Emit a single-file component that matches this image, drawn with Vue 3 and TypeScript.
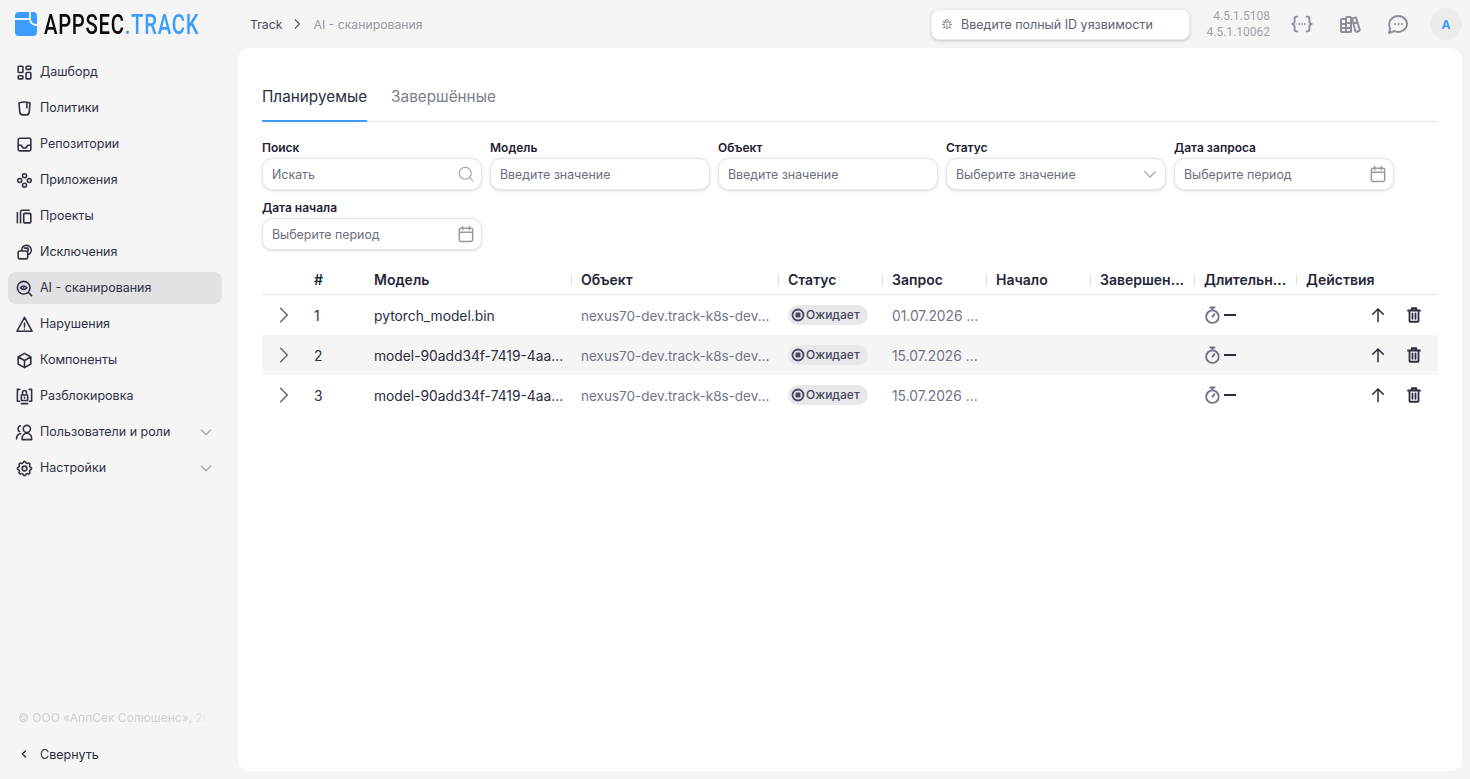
<template>
  <div class="layout">
    <aside class="sidebar">
      <div class="logo">
        <svg class="logo-mark" viewBox="0 0 22 24" width="22" height="24">
          <rect class="mark-bg" width="22" height="24" rx="4" />
          <path class="mark-line" d="M0 7h15V0M15 7c0 3.500 3 6 7 6" />
        </svg>
        <span class="logo-text">APPSEC<span class="logo-accent">.TRACK</span></span>
      </div>
      <nav class="nav">
        <a v-for="item in navItems" :key="item.label" class="nav-item" :class="{ active: item.active }">
          <svg class="nav-icon" viewBox="0 0 24 24"><path :d="item.icon" /></svg>
          <span class="nav-label">{{ item.label }}</span>
          <svg v-if="item.sub" class="nav-caret" viewBox="0 0 24 24"><path d="M5 9l7 7 7-7" /></svg>
        </a>
      </nav>
      <div class="copyright">© ООО «АппСек Солюшенс», 2024</div>
      <a class="collapse">
        <svg class="collapse-icon" viewBox="0 0 24 24"><path d="M15 6l-6 6 6 6" /></svg>
        <span>Свернуть</span>
      </a>
    </aside>

    <div class="main">
      <header class="topbar">
        <div class="crumbs">
          <span class="crumb">Track</span>
          <svg class="crumb-sep" viewBox="0 0 24 24"><path d="M9 5l7 7-7 7" /></svg>
          <span class="crumb-current">AI - сканирования</span>
        </div>
        <div class="vuln-search">
          <svg class="vuln-icon" viewBox="0 0 24 24"><path d="M9 8V6a3 3 0 0 1 6 0v2M8 8h8a2 2 0 0 1 2 2v5a6 6 0 0 1-12 0v-5a2 2 0 0 1 2-2zM12 12v7M3 6l3 3M21 6l-3 3M3 13h3M21 13h-3M4 20l3-2M20 20l-3-2" /></svg>
          <span>Введите полный ID уязвимости</span>
        </div>
        <div class="versions">
          <span>4.5.1.5108</span>
          <span>4.5.1.10062</span>
        </div>
        <svg class="top-icon" viewBox="-1 -1 26 26"><path d="M7 4H6a2 2 0 0 0-2 2v3c0 1.500-1 2.500-2.500 3C3 12.500 4 13.500 4 15v3a2 2 0 0 0 2 2h1M17 4h1a2 2 0 0 1 2 2v3c0 1.500 1 2.500 2.500 3-1.500.5-2.500 1.500-2.500 3v3a2 2 0 0 1-2 2h-1M9 12h.01M12 12h.01M15 12h.01" /></svg>
        <svg class="top-icon" viewBox="0 0 24 24"><path d="M3 8a1 1 0 0 1 1-1h3a1 1 0 0 1 1 1v12H4a1 1 0 0 1-1-1zM8 6a1 1 0 0 1 1-1h3a1 1 0 0 1 1 1v14H8zM14 6.500l3-.9a1 1 0 0 1 1.200.7l3.500 11.500a1 1 0 0 1-.7 1.200l-2.500.7a1 1 0 0 1-1.200-.7zM3 12h5M8 11h5M3 16h10M15.500 11.500l3.500-1" /></svg>
        <svg class="top-icon" viewBox="0 0 24 24"><path d="M3 21l1.200-4.500C2.300 13 3 8.700 6.300 6.100c3.400-2.700 8.400-2.700 11.800 0 3.300 2.700 3.900 7 1.400 10.300-2.500 3.300-7.500 4.400-11.300 2.800zM9 12h.01M12.500 12h.01M16 12h.01" /></svg>
        <div class="avatar">A</div>
      </header>

      <main class="card">
        <div class="tabs">
          <div class="tab tab-active">Планируемые</div>
          <div class="tab">Завершённые</div>
        </div>

        <div class="filters">
          <label v-for="f in filters" :key="f.label" class="field">
            <span class="field-label">{{ f.label }}</span>
            <span class="control">
              <span class="placeholder">{{ f.placeholder }}</span>
              <svg v-if="f.icon" class="control-icon" :class="f.icon" viewBox="0 0 24 24"><path :d="controlIcons[f.icon]" /></svg>
            </span>
          </label>
        </div>

        <table class="grid">
          <colgroup>
            <col v-for="(w, i) in colWidths" :key="i" :style="{ width: w + 'px' }" />
          </colgroup>
          <thead>
            <tr>
              <th></th>
              <th>#</th>
              <th>Модель</th>
              <th v-for="h in sepHeaders" :key="h" class="sep">{{ h }}</th>
            </tr>
          </thead>
          <tbody>
            <tr v-for="row in rows" :key="row.id">
              <td>
                <svg class="expand-icon" viewBox="0 0 24 24"><path d="M8 4l8 8-8 8" /></svg>
              </td>
              <td class="txt dark">{{ row.id }}</td>
              <td class="txt dark">{{ row.model }}</td>
              <td class="txt object">{{ row.object }}</td>
              <td>
                <span class="chip">
                  <svg class="chip-icon" viewBox="0 0 14 14">
                    <circle cx="7" cy="7" r="5.500" fill="none" stroke="currentColor" stroke-width="1.800" />
                    <rect x="4.500" y="4.500" width="5" height="5" rx="1" fill="currentColor" />
                  </svg>
                  <span>Ожидает</span>
                </span>
              </td>
              <td class="txt">{{ row.requested }}</td>
              <td></td>
              <td></td>
              <td>
                <span class="duration">
                  <svg class="timer" viewBox="0 0 24 24"><path d="M5 14a7.500 7.500 0 1 0 15 0a7.500 7.500 0 1 0-15 0M10 3h5M12.500 3v3M12.500 14l2.500-3" /></svg>
                  <span class="dash"></span>
                </span>
              </td>
              <td>
                <span class="actions">
                  <svg class="action" viewBox="0 0 24 24"><path d="M12 21V4M5 11l7-7 7 7" /></svg>
                  <svg class="action trash" viewBox="0 0 24 24"><path d="M4 6h16M9 6V3h6v3M6 6v14a1 1 0 0 0 1 1h10a1 1 0 0 0 1-1V6M10 10v7M14 10v7" /></svg>
                </span>
              </td>
            </tr>
          </tbody>
        </table>
      </main>
    </div>
  </div>
</template>

<script setup lang="ts">
type NavItem = { label: string; icon: string; active?: boolean; sub?: boolean };
type Filter = { label: string; placeholder: string; icon?: 'search' | 'calendar' | 'chevron' };

const navItems: NavItem[] = [
  { label: 'Дашборд', icon: 'M5 4h4a1 1 0 0 1 1 1v6a1 1 0 0 1-1 1H5a1 1 0 0 1-1-1V5a1 1 0 0 1 1-1zM5 16h4a1 1 0 0 1 1 1v2a1 1 0 0 1-1 1H5a1 1 0 0 1-1-1v-2a1 1 0 0 1 1-1zM15 12h4a1 1 0 0 1 1 1v6a1 1 0 0 1-1 1h-4a1 1 0 0 1-1-1v-6a1 1 0 0 1 1-1zM15 4h4a1 1 0 0 1 1 1v2a1 1 0 0 1-1 1h-4a1 1 0 0 1-1-1V5a1 1 0 0 1 1-1z' },
  { label: 'Политики', icon: 'M5 5c4-1.500 10-1.500 14 0l-1 11c-.2 2.500-1.500 4-3.500 4h-5c-2 0-3.300-1.500-3.500-4zM15 5v6' },
  { label: 'Репозитории', icon: 'M6 4h12a2 2 0 0 1 2 2v12a2 2 0 0 1-2 2H6a2 2 0 0 1-2-2V6a2 2 0 0 1 2-2zM4 13h4c.5 2 2 3.500 4 3.500s3.500-1.500 4-3.500h4' },
  { label: 'Приложения', icon: 'M9.500 6a2.500 2.500 0 1 0 5 0a2.500 2.500 0 1 0-5 0M3.500 12a2.500 2.500 0 1 0 5 0a2.500 2.500 0 1 0-5 0M15.500 12a2.500 2.500 0 1 0 5 0a2.500 2.500 0 1 0-5 0M9.500 18a2.500 2.500 0 1 0 5 0a2.500 2.500 0 1 0-5 0' },
  { label: 'Проекты', icon: 'M3 20V7M7 20V6a2 2 0 0 1 2-2h9M12 8h7a1 1 0 0 1 1 1v10a1 1 0 0 1-1 1h-7a1 1 0 0 1-1-1V9a1 1 0 0 1 1-1z' },
  { label: 'Исключения', icon: 'M6 10h8a2 2 0 0 1 2 2v6a2 2 0 0 1-2 2H6a2 2 0 0 1-2-2v-6a2 2 0 0 1 2-2zM8.500 10V9a6 6 0 1 1 7.500 5.800M12 6.500h4.500v4' },
  { label: 'AI - сканирования', active: true, icon: 'M3 11a8 8 0 1 0 16 0a8 8 0 1 0-16 0M17 17l4 4M7 11c2-3 6-3 8 0c-2 3-6 3-8 0M11 11h.01' },
  { label: 'Нарушения', icon: 'M12 3L2.500 20.500h19zM12 10v5M12 18h.01' },
  { label: 'Компоненты', icon: 'M12 3l8 4.500v9L12 21l-8-4.500v-9zM12 12l8-4.500M12 12v9M12 12L4 7.500' },
  { label: 'Разблокировка', icon: 'M6 3H3v15h3M18 3h3v15h-3M8 10h8v6a1 1 0 0 1-1 1H9a1 1 0 0 1-1-1zM9.500 10V7a2.500 2.500 0 0 1 5 0v1M12 13v1M8 21h8' },
  { label: 'Пользователи и роли', sub: true, icon: 'M10.500 7.500a4.500 4.500 0 1 0 9 0a4.500 4.500 0 1 0-9 0M9 21v-2c0-3 2.500-6 6-6s6 3 6 6v2zM7 3.500a4 4 0 0 0-1 7.500M5 14c-2 1-3 3-3 6M7 13.500H6' },
  { label: 'Настройки', sub: true, icon: 'M10.325 4.317c.426-1.756 2.924-1.756 3.35 0a1.724 1.724 0 0 0 2.573 1.066c1.543-.94 3.31.826 2.37 2.37a1.724 1.724 0 0 0 1.065 2.572c1.756.426 1.756 2.924 0 3.35a1.724 1.724 0 0 0-1.066 2.573c.94 1.543-.826 3.31-2.37 2.37a1.724 1.724 0 0 0-2.572 1.065c-.426 1.756-2.924 1.756-3.35 0a1.724 1.724 0 0 0-2.573-1.066c-1.543.94-3.31-.826-2.37-2.37a1.724 1.724 0 0 0-1.065-2.572c-1.756-.426-1.756-2.924 0-3.350a1.724 1.724 0 0 0 1.066-2.573c-.94-1.543.826-3.31 2.37-2.37c1 .608 2.296.07 2.572-1.065zM9 12a3 3 0 1 0 6 0a3 3 0 0 0-6 0' },
];

const filters: Filter[] = [
  { label: 'Поиск', placeholder: 'Искать', icon: 'search' },
  { label: 'Модель', placeholder: 'Введите значение' },
  { label: 'Объект', placeholder: 'Введите значение' },
  { label: 'Статус', placeholder: 'Выберите значение', icon: 'chevron' },
  { label: 'Дата запроса', placeholder: 'Выберите период', icon: 'calendar' },
  { label: 'Дата начала', placeholder: 'Выберите период', icon: 'calendar' },
];

const controlIcons: Record<string, string> = {
  search: 'M3 11a8 8 0 1 0 16 0a8 8 0 1 0-16 0M17 17l4 4',
  chevron: 'M5 9l7 7 7-7',
  calendar: 'M6 5h12a2 2 0 0 1 2 2v12a2 2 0 0 1-2 2H6a2 2 0 0 1-2-2V7a2 2 0 0 1 2-2zM8 3v4M16 3v4M4 10h16',
};

const colWidths = [42, 60, 207, 207, 104, 104, 104, 104, 102, 142];
const sepHeaders = ['Объект', 'Статус', 'Запрос', 'Начало', 'Завершен...', 'Длительн...', 'Действия'];

const objectPath = 'nexus70-dev.track-k8s-dev...';
const rows = [
  { id: 1, model: 'pytorch_model.bin', object: objectPath, requested: '01.07.2026 ...' },
  { id: 2, model: 'model-90add34f-7419-4aa...', object: objectPath, requested: '15.07.2026 ...' },
  { id: 3, model: 'model-90add34f-7419-4aa...', object: objectPath, requested: '15.07.2026 ...' },
];
</script>

<style>
html,
body {
  margin: 0;
  background: #f5f5f5;
}
</style>

<style scoped>
.layout {
  display: flex;
  height: 779px;
  overflow: hidden;
  background: #f5f5f5;
  font-family: Inter, "Noto Sans", sans-serif;
  color: #2b2c40;
}

svg path {
  fill: none;
  stroke: currentColor;
  stroke-width: 2;
  stroke-linecap: round;
  stroke-linejoin: round;
}

/* sidebar */
.sidebar {
  width: 238px;
  flex: none;
  display: flex;
  flex-direction: column;
  box-sizing: border-box;
  padding: 0 16px 0 8px;
}

.logo {
  display: flex;
  align-items: center;
  height: 48px;
  padding-left: 7px;
  flex: none;
}

.logo-mark {
  flex: none;
}

.mark-bg {
  fill: #3b9eff;
}

.logo-mark .mark-line {
  stroke: #f5f5f5;
  stroke-width: 1.800;
  stroke-linecap: butt;
}

.logo-text {
  display: inline-block;
  margin-left: 7px;
  font-family: Roboto, sans-serif;
  font-size: 28px;
  font-weight: 500;
  letter-spacing: 1px;
  color: #0b0b0f;
  white-space: nowrap;
  transform: scaleX(0.725);
  transform-origin: left center;
}

.logo-accent {
  color: #3b9eff;
}

.nav {
  flex: 1;
  display: flex;
  flex-direction: column;
  gap: 4px;
  padding-top: 8px;
}

.nav-item {
  display: flex;
  align-items: center;
  height: 32px;
  padding: 0 8px 0 7px;
  border-radius: 8px;
  font-size: 12.500px;
  line-height: 16px;
  color: #2f3045;
}

.nav-item.active {
  background: #e2e2e2;
}

.nav-icon {
  width: 19px;
  height: 19px;
  flex: none;
  margin-right: 6px;
}

.nav-label {
  flex: 1;
  white-space: nowrap;
}

.nav-caret {
  width: 16px;
  height: 16px;
  color: #a9a9b2;
}

.copyright {
  width: 192px;
  margin-left: 10px;
  font-size: 12px;
  line-height: 16px;
  color: #cfcfd3;
  white-space: nowrap;
  overflow: hidden;
  -webkit-mask-image: linear-gradient(to right, #000 170px, transparent 192px);
  mask-image: linear-gradient(to right, #000 170px, transparent 192px);
}

.collapse {
  display: flex;
  align-items: center;
  height: 32px;
  margin-top: 12px;
  margin-bottom: 9px;
  padding-left: 10px;
  font-size: 12.500px;
  color: #2b2c40;
}

.collapse-icon {
  width: 12px;
  height: 12px;
  margin-right: 10px;
}

.collapse-icon path {
  stroke-width: 2.800;
}

/* top bar */
.main {
  flex: 1;
  min-width: 0;
  display: flex;
  flex-direction: column;
  padding: 0 8px 8px 0;
}

.topbar {
  flex: none;
  height: 48px;
  display: flex;
  align-items: center;
  padding-left: 12px;
  box-sizing: border-box;
}

.crumbs {
  flex: 1;
  display: flex;
  align-items: center;
  font-size: 12.250px;
}

.crumb {
  color: #4a4b5f;
}

.crumb-sep {
  width: 14px;
  height: 14px;
  margin: 0 9px 0 8px;
  color: #4a4b5f;
}

.crumb-current {
  color: #9a9aa6;
}

.vuln-search {
  width: 259px;
  height: 31px;
  box-sizing: border-box;
  display: flex;
  align-items: center;
  padding-left: 9px;
  margin-right: 23px;
  background: #fff;
  border-radius: 8px;
  border: 1px solid #ebebeb;
  box-shadow: 0 1px 3px rgba(40, 40, 60, 0.22);
  font-size: 12.500px;
  color: #5f6074;
}

.vuln-icon {
  width: 12px;
  height: 12px;
  margin-right: 8px;
  color: #8b8b98;
}

.versions {
  width: 57px;
  margin-right: 20px;
  display: flex;
  flex-direction: column;
  align-items: flex-end;
  font-family: Roboto, sans-serif;
  font-size: 12px;
  line-height: 16px;
  color: #a3a3ad;
  white-space: nowrap;
}

.top-icon {
  width: 24px;
  height: 24px;
  margin-right: 24px;
  color: #8d8e9b;
}

.avatar {
  width: 32px;
  height: 32px;
  margin-left: -4px;
  border-radius: 50%;
  background: #ececec;
  display: flex;
  align-items: center;
  justify-content: center;
  font-size: 12px;
  font-weight: 700;
  color: #3b9eff;
}

/* card */
.card {
  flex: 1;
  min-height: 0;
  background: #fff;
  border-radius: 12px;
  padding: 32px 24px 0;
  box-sizing: border-box;
}

.tabs {
  display: flex;
  gap: 24px;
  border-bottom: 1px solid #e4e4e7;
}

.tab {
  position: relative;
  height: 42px;
  line-height: 34px;
  box-sizing: border-box;
  font-size: 15.300px;
  color: #7b7c8c;
  margin-bottom: -1px;
}

.tab-active {
  color: #2b2c40;
  border-bottom: 2px solid #3b9eff;
}

.filters {
  display: flex;
  flex-wrap: wrap;
  gap: 9px 8px;
  margin-top: 17px;
}

.field {
  width: 220px;
  display: flex;
  flex-direction: column;
  gap: 2px;
}

.field-label {
  font-size: 12px;
  line-height: 17px;
  font-weight: 600;
  color: #1f2033;
}

.control {
  height: 32px;
  box-sizing: border-box;
  display: flex;
  align-items: center;
  justify-content: space-between;
  padding: 0 5px 0 9px;
  border: 1px solid #e6e6e9;
  border-radius: 10px;
  background: #fff;
  box-shadow: 0 1px 3px rgba(40, 40, 60, 0.16);
}

.placeholder {
  font-size: 12.400px;
  color: #6c6d80;
}

.control-icon {
  width: 20px;
  height: 20px;
  color: #9a9aa7;
}

.control-icon path {
  stroke-width: 1.800;
}

.control-icon.search,
.control-icon.chevron {
  width: 18px;
  height: 18px;
  margin-right: 1px;
}

.control-icon.search path {
  stroke-width: 1.400;
}

.control-icon.chevron {
  color: #a9a9b2;
}

/* table */
.grid {
  width: 1176px;
  margin-top: 15px;
  border-collapse: collapse;
  table-layout: fixed;
  font-size: 13.800px;
}

.grid th {
  position: relative;
  height: 29px;
  padding: 0 0 0 10px;
  text-align: left;
  font-size: 14px;
  font-weight: 600;
  color: #26273a;
  border-bottom: 1px solid #e4e4e7;
  white-space: nowrap;
}

.grid th.sep::before {
  content: '';
  position: absolute;
  left: 0;
  top: 10px;
  width: 1px;
  height: 10px;
  background: #dcdce0;
}

.grid td {
  box-sizing: border-box;
  height: 40px;
  padding: 0 0 0 10px;
  color: #73748a;
  white-space: nowrap;
}

.grid td.txt {
  padding-top: 2px;
}

.grid td.dark {
  color: #2b2c40;
}

.grid td.object {
  font-size: 13.500px;
}

.grid tbody tr:nth-child(2) td {
  background: #f5f5f5;
}

.expand-icon {
  display: block;
  width: 20px;
  height: 20px;
  margin-left: 2px;
  color: #5f6074;
}

.expand-icon path {
  stroke-width: 1.700;
}

.chip {
  display: inline-flex;
  align-items: center;
  gap: 1px;
  height: 20px;
  padding: 0 8px 0 3px;
  border-radius: 10px;
  background: #e8e8ea;
  font-size: 12px;
  font-weight: 500;
  color: #46475b;
}

.chip-icon {
  width: 14px;
  height: 14px;
}

.duration {
  display: flex;
  align-items: center;
  gap: 2px;
  margin-left: -2px;
}

.timer {
  width: 20px;
  height: 20px;
  color: #6f7085;
}

.timer path {
  stroke-width: 2.200;
}

.dash {
  width: 12px;
  height: 2px;
  background: #2b2c40;
}

.actions {
  display: flex;
  justify-content: flex-end;
  align-items: center;
  gap: 18px;
  padding-right: 15px;
  color: #2b2c40;
}

.action {
  width: 18px;
  height: 18px;
}

.action.trash path {
  stroke-width: 2.400;
}
</style>
